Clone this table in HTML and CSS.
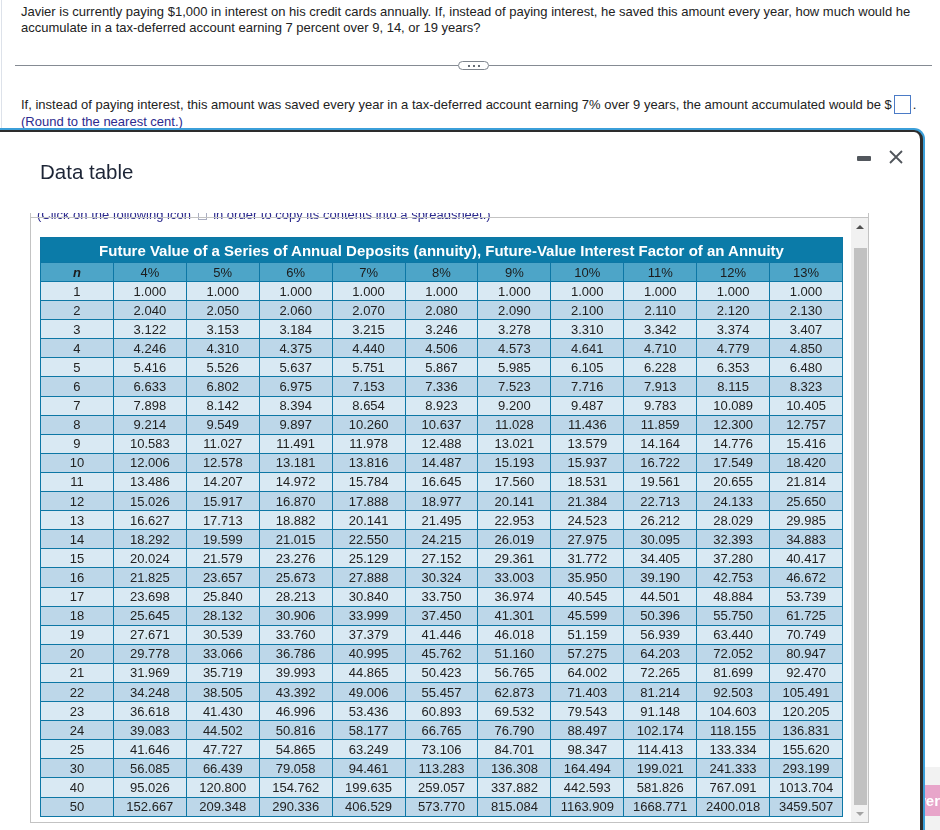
FILE: index.html
```html
<!DOCTYPE html>
<html lang="en">
<head>
<meta charset="utf-8">
<title>Data table</title>
<link rel="stylesheet" href="styles.css">
</head>
<body>
<div class="page">
  <div class="content">
    <p class="prompt">Javier is currently paying $1,000 in interest on his credit cards annually. If, instead of paying interest, he saved this amount every year, how much would he accumulate in a tax-deferred account earning 7 percent over 9, 14, or 19 years?</p>
    <div class="divider"><span class="rule"></span><span class="pill"><i></i><i></i><i></i></span><span class="rule"></span></div>
    <div class="answer"><span>If, instead of paying interest, this amount was saved every year in a tax-deferred account earning 7% over 9 years, the amount accumulated would be $</span><span class="box"></span><span class="dot">.</span></div>
    <div class="round">(Round to the nearest cent.)</div>
  </div>

  <div class="footer"><button class="check">Check Answer</button></div>

  <div class="modal">
    <div class="modal-head">
      <h1 class="modal-title">Data table</h1>
      <div class="win-controls">
        <span class="minimize"></span>
        <svg class="close" width="14" height="14" viewBox="0 0 14 14"><path d="M1 1L13 13M13 1L1 13" stroke="#50555b" stroke-width="1.8" fill="none"/></svg>
      </div>
    </div>
    <div class="scrollbox">
      <div class="viewport">
        <div class="copy-note">(Click on the following icon <span class="copy-icon"></span> in order to copy its contents into a spreadsheet.)</div>
        <table class="fv">
          <thead>
            <tr class="t-title"><th colspan="11">Future Value of a Series of Annual Deposits (annuity), Future-Value Interest Factor of an Annuity</th></tr>
            <tr class="t-head"><th class="n">n</th><th>4%</th><th>5%</th><th>6%</th><th>7%</th><th>8%</th><th>9%</th><th>10%</th><th>11%</th><th>12%</th><th>13%</th></tr>
          </thead>
          <tbody>
            <tr><td>1</td><td>1.000</td><td>1.000</td><td>1.000</td><td>1.000</td><td>1.000</td><td>1.000</td><td>1.000</td><td>1.000</td><td>1.000</td><td>1.000</td></tr>
            <tr><td>2</td><td>2.040</td><td>2.050</td><td>2.060</td><td>2.070</td><td>2.080</td><td>2.090</td><td>2.100</td><td>2.110</td><td>2.120</td><td>2.130</td></tr>
            <tr><td>3</td><td>3.122</td><td>3.153</td><td>3.184</td><td>3.215</td><td>3.246</td><td>3.278</td><td>3.310</td><td>3.342</td><td>3.374</td><td>3.407</td></tr>
            <tr><td>4</td><td>4.246</td><td>4.310</td><td>4.375</td><td>4.440</td><td>4.506</td><td>4.573</td><td>4.641</td><td>4.710</td><td>4.779</td><td>4.850</td></tr>
            <tr><td>5</td><td>5.416</td><td>5.526</td><td>5.637</td><td>5.751</td><td>5.867</td><td>5.985</td><td>6.105</td><td>6.228</td><td>6.353</td><td>6.480</td></tr>
            <tr><td>6</td><td>6.633</td><td>6.802</td><td>6.975</td><td>7.153</td><td>7.336</td><td>7.523</td><td>7.716</td><td>7.913</td><td>8.115</td><td>8.323</td></tr>
            <tr><td>7</td><td>7.898</td><td>8.142</td><td>8.394</td><td>8.654</td><td>8.923</td><td>9.200</td><td>9.487</td><td>9.783</td><td>10.089</td><td>10.405</td></tr>
            <tr><td>8</td><td>9.214</td><td>9.549</td><td>9.897</td><td>10.260</td><td>10.637</td><td>11.028</td><td>11.436</td><td>11.859</td><td>12.300</td><td>12.757</td></tr>
            <tr><td>9</td><td>10.583</td><td>11.027</td><td>11.491</td><td>11.978</td><td>12.488</td><td>13.021</td><td>13.579</td><td>14.164</td><td>14.776</td><td>15.416</td></tr>
            <tr><td>10</td><td>12.006</td><td>12.578</td><td>13.181</td><td>13.816</td><td>14.487</td><td>15.193</td><td>15.937</td><td>16.722</td><td>17.549</td><td>18.420</td></tr>
            <tr><td>11</td><td>13.486</td><td>14.207</td><td>14.972</td><td>15.784</td><td>16.645</td><td>17.560</td><td>18.531</td><td>19.561</td><td>20.655</td><td>21.814</td></tr>
            <tr><td>12</td><td>15.026</td><td>15.917</td><td>16.870</td><td>17.888</td><td>18.977</td><td>20.141</td><td>21.384</td><td>22.713</td><td>24.133</td><td>25.650</td></tr>
            <tr><td>13</td><td>16.627</td><td>17.713</td><td>18.882</td><td>20.141</td><td>21.495</td><td>22.953</td><td>24.523</td><td>26.212</td><td>28.029</td><td>29.985</td></tr>
            <tr><td>14</td><td>18.292</td><td>19.599</td><td>21.015</td><td>22.550</td><td>24.215</td><td>26.019</td><td>27.975</td><td>30.095</td><td>32.393</td><td>34.883</td></tr>
            <tr><td>15</td><td>20.024</td><td>21.579</td><td>23.276</td><td>25.129</td><td>27.152</td><td>29.361</td><td>31.772</td><td>34.405</td><td>37.280</td><td>40.417</td></tr>
            <tr><td>16</td><td>21.825</td><td>23.657</td><td>25.673</td><td>27.888</td><td>30.324</td><td>33.003</td><td>35.950</td><td>39.190</td><td>42.753</td><td>46.672</td></tr>
            <tr><td>17</td><td>23.698</td><td>25.840</td><td>28.213</td><td>30.840</td><td>33.750</td><td>36.974</td><td>40.545</td><td>44.501</td><td>48.884</td><td>53.739</td></tr>
            <tr><td>18</td><td>25.645</td><td>28.132</td><td>30.906</td><td>33.999</td><td>37.450</td><td>41.301</td><td>45.599</td><td>50.396</td><td>55.750</td><td>61.725</td></tr>
            <tr><td>19</td><td>27.671</td><td>30.539</td><td>33.760</td><td>37.379</td><td>41.446</td><td>46.018</td><td>51.159</td><td>56.939</td><td>63.440</td><td>70.749</td></tr>
            <tr><td>20</td><td>29.778</td><td>33.066</td><td>36.786</td><td>40.995</td><td>45.762</td><td>51.160</td><td>57.275</td><td>64.203</td><td>72.052</td><td>80.947</td></tr>
            <tr><td>21</td><td>31.969</td><td>35.719</td><td>39.993</td><td>44.865</td><td>50.423</td><td>56.765</td><td>64.002</td><td>72.265</td><td>81.699</td><td>92.470</td></tr>
            <tr><td>22</td><td>34.248</td><td>38.505</td><td>43.392</td><td>49.006</td><td>55.457</td><td>62.873</td><td>71.403</td><td>81.214</td><td>92.503</td><td>105.491</td></tr>
            <tr><td>23</td><td>36.618</td><td>41.430</td><td>46.996</td><td>53.436</td><td>60.893</td><td>69.532</td><td>79.543</td><td>91.148</td><td>104.603</td><td>120.205</td></tr>
            <tr><td>24</td><td>39.083</td><td>44.502</td><td>50.816</td><td>58.177</td><td>66.765</td><td>76.790</td><td>88.497</td><td>102.174</td><td>118.155</td><td>136.831</td></tr>
            <tr><td>25</td><td>41.646</td><td>47.727</td><td>54.865</td><td>63.249</td><td>73.106</td><td>84.701</td><td>98.347</td><td>114.413</td><td>133.334</td><td>155.620</td></tr>
            <tr><td>30</td><td>56.085</td><td>66.439</td><td>79.058</td><td>94.461</td><td>113.283</td><td>136.308</td><td>164.494</td><td>199.021</td><td>241.333</td><td>293.199</td></tr>
            <tr><td>40</td><td>95.026</td><td>120.800</td><td>154.762</td><td>199.635</td><td>259.057</td><td>337.882</td><td>442.593</td><td>581.826</td><td>767.091</td><td>1013.704</td></tr>
            <tr><td>50</td><td>152.667</td><td>209.348</td><td>290.336</td><td>406.529</td><td>573.770</td><td>815.084</td><td>1163.909</td><td>1668.771</td><td>2400.018</td><td>3459.507</td></tr>
          </tbody>
        </table>
      </div>
      <div class="scrollbar">
        <div class="sb-btn"><span class="arrow-up"></span></div>
        <div class="sb-track"><div class="sb-thumb"></div></div>
        <div class="sb-btn"><span class="arrow-down"></span></div>
      </div>
    </div>
  </div>
</div>
</body>
</html>
```

FILE: styles.css
```css
html, body {
  margin: 0;
  padding: 0;
  overflow: hidden;
}
body {
  width: 940px;
  height: 830px;
  background: #fff;
  font-family: "Liberation Sans", Arial, sans-serif;
  color: #222;
}
.page {
  position: relative;
  width: 940px;
  height: 830px;
}

/* ---------- question ---------- */
.content {
  margin-left: 1px;
  border-left: 1px solid #dde2ea;
  padding-top: 4px;
  height: 126px;
}
.prompt {
  margin: 0 0 0 19px;
  width: 915px;
  font-size: 13px;
  line-height: 16px;
  color: #222;
}
.divider {
  display: flex;
  align-items: center;
  height: 9px;
  margin: 25px 8px 0 13px;
}
.rule {
  flex: 1;
  height: 1px;
  background: #858b93;
}
.pill {
  width: 31px;
  height: 9px;
  box-sizing: border-box;
  border: 1px solid #7d848d;
  border-radius: 5px;
  background: #fff;
  display: flex;
  align-items: center;
  justify-content: center;
  gap: 3px;
}
.pill i {
  width: 2px;
  height: 2px;
  background: #666d76;
}
.answer {
  display: flex;
  align-items: center;
  height: 19px;
  margin: 25px 0 0 19px;
  font-size: 13px;
  line-height: 16px;
  white-space: nowrap;
}
.box {
  width: 17px;
  height: 19px;
  box-sizing: border-box;
  border: 1px solid #4b7bc6;
  margin-left: 2px;
}
.dot {
  margin-left: 2px;
}
.round {
  margin-left: 19px;
  font-size: 13px;
  line-height: 16px;
  color: #2d2b8e;
}

/* ---------- background footer ---------- */
.footer {
  position: fixed;
  left: 0;
  right: 0;
  bottom: 0;
  height: 63px;
  box-sizing: border-box;
  padding-top: 18px;
  background: #f2f2f2;
  display: flex;
  justify-content: flex-end;
  align-items: flex-start;
  z-index: 1;
}
.check {
  height: 31px;
  border: 0;
  margin: 0;
  padding: 0 0 0 14px;
  background: #e8a5ca;
  color: #fff;
  font-family: "Liberation Sans", Arial, sans-serif;
  font-weight: bold;
  font-size: 15px;
}

/* ---------- modal ---------- */
.modal {
  position: absolute;
  left: -3px;
  top: 130px;
  width: 926px;
  height: 760px;
  box-sizing: border-box;
  border: solid #2d2d2d;
  border-width: 2px 3px 3px 3px;
  border-radius: 0 9px 0 0;
  box-shadow: 0 0 0 2px #3b9fd9;
  background: #fff;
  z-index: 10;
}
.modal-head {
  display: flex;
  justify-content: space-between;
  align-items: flex-start;
  padding: 18px 17px 0 40px;
}
.modal-title {
  margin: 10px 0 0;
  font-size: 20.5px;
  line-height: 24px;
  font-weight: normal;
  color: #1d2536;
}
.win-controls {
  display: flex;
  align-items: flex-start;
  gap: 18px;
}
.minimize {
  width: 14px;
  height: 5px;
  margin-top: 6px;
  border-radius: 1px;
  background: #52575d;
}
.close {
  display: block;
}

.scrollbox {
  position: relative;
  display: flex;
  margin: 29px 51px 0 30px;
  height: 610px;
  box-sizing: border-box;
  border: 1px solid #c3c3c3;
  border-top: 0;
}
.scrollbox::before {
  content: "";
  position: absolute;
  left: -1px;
  right: -1px;
  top: 4px;
  height: 1px;
  background: #c3c3c3;
}
.viewport {
  flex: 1;
  overflow: hidden;
}
.copy-note {
  margin: -6px 0 0 6px;
  font-size: 13px;
  line-height: 16px;
  color: #2d2b8e;
  white-space: nowrap;
}
.copy-icon {
  display: inline-block;
  width: 7px;
  height: 7px;
  border: 1px solid #a9adc0;
  margin: 0 3px;
  vertical-align: -1px;
}

/* ---------- table ---------- */
.fv {
  border-collapse: collapse;
  table-layout: fixed;
  width: 803px;
  margin: 14px 0 0 9px;
  font-size: 13px;
  color: #222;
}
.fv th, .fv td {
  border: 1px solid #0d77a5;
  padding: 0;
  text-align: center;
  vertical-align: middle;
  line-height: 15px;
}
.t-title {
  height: 25px;
}
.t-title th {
  background: #0b7ba8;
  color: #fff;
  font-size: 15px;
  font-weight: bold;
}
.t-head {
  height: 19px;
}
.t-head th {
  background: #4da5c8;
  font-weight: normal;
  color: #1c1c1c;
}
.t-head th.n {
  font-weight: bold;
  font-style: italic;
}
.fv tbody tr {
  height: 19.1px;
}
.fv tbody tr:nth-child(odd) td {
  background: #d9e9f3;
}
.fv tbody tr:nth-child(even) td {
  background: #bdd7e9;
}

/* ---------- fake scrollbar ---------- */
.scrollbar {
  width: 17px;
  margin-top: 5px;
  background: #f1f1f1;
  display: flex;
  flex-direction: column;
}
.sb-btn {
  height: 17px;
  display: flex;
  align-items: center;
  justify-content: center;
}
.arrow-up {
  width: 0;
  height: 0;
  border-left: 4px solid transparent;
  border-right: 4px solid transparent;
  border-bottom: 4px solid #505050;
}
.arrow-down {
  width: 0;
  height: 0;
  border-left: 4px solid transparent;
  border-right: 4px solid transparent;
  border-top: 4px solid #a3a3a3;
}
.sb-track {
  flex: 1;
  display: flex;
  flex-direction: column;
  justify-content: flex-end;
  padding: 0 1px 0 3px;
}
.sb-thumb {
  height: 557px;
  background: #c1c1c1;
}
```
